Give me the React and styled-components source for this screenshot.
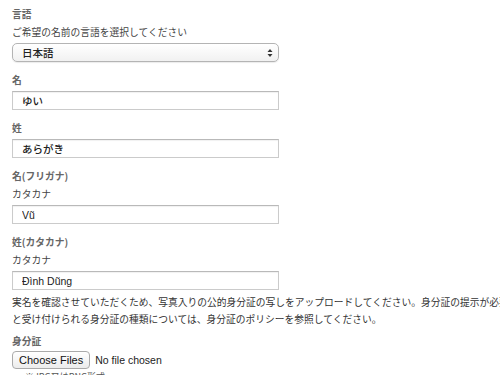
import React from "react";
import styled, { createGlobalStyle } from "styled-components";

const Global = createGlobalStyle`
  html, body { margin: 0; padding: 0; background: #fff; overflow: hidden; }
  body { font-family: "Noto Sans CJK JP", "Liberation Sans", sans-serif; }
`;

const Page = styled.div`
  padding: 5px 0 0 12px;
  width: 640px;
  font-size: 9.75px;
  color: #333;
`;

const Field = styled.div`
  display: flex;
  flex-direction: column;
  margin-bottom: ${(p) => (p.$last ? "4px" : "9px")};
`;

const Label = styled.div`
  font-weight: 700;
  color: #666;
  line-height: 18px;
  height: 18px;
`;

const Help = styled.div`
  color: #444;
  line-height: 18px;
  height: 18px;
`;

const SelectBox = styled.div`
  box-sizing: border-box;
  width: 267px;
  height: 19px;
  margin-top: 2px;
  padding: 0 5px 0 9px;
  display: flex;
  align-items: center;
  justify-content: space-between;
  border: 1px solid #b4b4b4;
  border-radius: 5px;
  background: linear-gradient(#ffffff, #f1f1f1);
  box-shadow: 0 1px 1px rgba(0, 0, 0, 0.08);
  font: 500 10.5px "Liberation Sans", "Noto Sans CJK JP", sans-serif;
  color: #222;
`;

const TextInput = styled.input`
  box-sizing: border-box;
  width: 267px;
  height: 19px;
  margin: 2px 0 0;
  padding: 0 0 0 9px;
  border: 1px solid #cbcbcb;
  border-top-color: #b9b9b9;
  box-shadow: inset 0 1px 1px rgba(0, 0, 0, 0.06);
  font: 500 10.5px "Liberation Sans", "Noto Sans CJK JP", sans-serif;
  color: #222;
  outline: none;
  background: #fff;
`;

const Notice = styled.p`
  margin: 0 0 4px;
  line-height: 17px;
  white-space: nowrap;
  color: #333;
`;

const FileRow = styled.div`
  display: flex;
  align-items: center;
  gap: 5px;
  margin-top: 1px;
  height: 18px;
`;

const FileButton = styled.button`
  box-sizing: border-box;
  height: 18px;
  padding: 0 6px;
  border: 1px solid #aaa;
  border-radius: 4px;
  background: linear-gradient(#ffffff, #ececec);
  font: 500 11px "Liberation Sans", sans-serif;
  color: #111;
  line-height: 16px;
`;

const FileStatus = styled.span`
  font: 10.5px "Liberation Sans", sans-serif;
  color: #222;
`;

const SmallNote = styled.div`
  margin: 2px 0 0 13px;
  font-size: 9px;
  line-height: 12px;
  color: #555;
`;

function Arrows() {
  return (
    <svg width="6" height="10" viewBox="0 0 6 10">
      <path d="M3 1 L5.5 4 H0.5 Z" fill="#333" />
      <path d="M3 9 L5.5 6 H0.5 Z" fill="#333" />
    </svg>
  );
}

export default function App() {
  return (
    <>
      <Global />
      <Page>
        <Field>
          <Label>言語</Label>
          <Help>ご希望の名前の言語を選択してください</Help>
          <SelectBox>
            <span>日本語</span>
            <Arrows />
          </SelectBox>
        </Field>
        <Field>
          <Label>名</Label>
          <TextInput value="ゆい" readOnly />
        </Field>
        <Field>
          <Label>姓</Label>
          <TextInput value="あらがき" readOnly />
        </Field>
        <Field>
          <Label>名(フリガナ)</Label>
          <Help>カタカナ</Help>
          <TextInput value="Vũ" readOnly />
        </Field>
        <Field $last>
          <Label>姓(カタカナ)</Label>
          <Help>カタカナ</Help>
          <TextInput value="Đình Dũng" readOnly />
        </Field>
        <Notice>
          実名を確認させていただくため、写真入りの公的身分証の写しをアップロードしてください。身分証の提示が必要な理由
          <br />
          と受け付けられる身分証の種類については、身分証のポリシーを参照してください。
        </Notice>
        <Label>身分証</Label>
        <FileRow>
          <FileButton type="button">Choose Files</FileButton>
          <FileStatus>No file chosen</FileStatus>
        </FileRow>
        <SmallNote>※JPG又はPNG形式</SmallNote>
      </Page>
    </>
  );
}
